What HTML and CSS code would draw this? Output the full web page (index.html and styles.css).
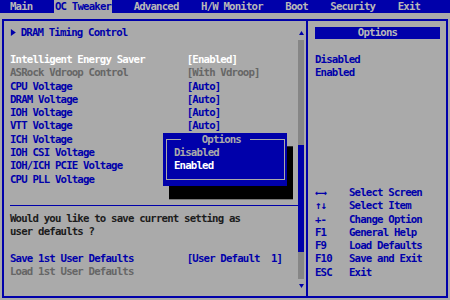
FILE: index.html
```html
<!DOCTYPE html>
<html lang="en">
<head>
    <meta charset="UTF-8">
    <title>OC Tweaker</title>
    <link rel="stylesheet" href="styles.css">
</head>
<body>
<div class="tabs">
    <span class="tab">Main</span>
    <span class="tab active">OC Tweaker</span>
    <span class="tab">Advanced</span>
    <span class="tab">H/W Monitor</span>
    <span class="tab">Boot</span>
    <span class="tab">Security</span>
    <span class="tab">Exit</span>
</div>

<div class="frame">
    <!-- settings list -->
    <div class="main">
        <div class="list">
            <div class="row submenu">
                <svg class="arrow" width="6" height="7" viewBox="0 0 6 7"><polygon points="0,0 5,3.5 0,7" fill="#0000aa"/></svg>
                <span>DRAM Timing Control</span>
            </div>
            <div class="gap"></div>
            <div class="row current"><span class="label">Intelligent Energy Saver</span><span class="value">[Enabled]</span></div>
            <div class="row off"><span class="label">ASRock Vdroop Control</span><span class="value">[With Vdroop]</span></div>
            <div class="row"><span class="label">CPU Voltage</span><span class="value">[Auto]</span></div>
            <div class="row"><span class="label">DRAM Voltage</span><span class="value">[Auto]</span></div>
            <div class="row"><span class="label">IOH Voltage</span><span class="value">[Auto]</span></div>
            <div class="row"><span class="label">VTT Voltage</span><span class="value">[Auto]</span></div>
            <div class="row"><span class="label">ICH Voltage</span></div>
            <div class="row"><span class="label">IOH CSI Voltage</span></div>
            <div class="row"><span class="label">IOH/ICH PCIE Voltage</span></div>
            <div class="row"><span class="label">CPU PLL Voltage</span></div>
            <div class="gap"></div>
            <div class="rule"></div>
            <p class="note">Would you like to save current setting as<br>user defaults ?</p>
            <div class="gap"></div>
            <div class="row"><span class="label">Save 1st User Defaults</span><span class="value">[User Default  1]</span></div>
            <div class="row off"><span class="label">Load 1st User Defaults</span></div>
        </div>

        <div class="scrollbar">
            <div class="scroll-btn">
                <svg width="5" height="4" viewBox="0 0 5 4"><polygon points="2.5,0 5,4 0,4" fill="#0000aa"/></svg>
            </div>
            <div class="track"><div class="thumb"></div></div>
            <div class="scroll-btn">
                <svg width="5" height="4" viewBox="0 0 5 4"><polygon points="0,0 5,0 2.5,4" fill="#0000aa"/></svg>
            </div>
        </div>
    </div>

    <!-- right help pane -->
    <div class="help">
        <div class="help-title">Options</div>
        <div class="gap"></div>
        <div class="row">Disabled</div>
        <div class="row">Enabled</div>

        <div class="keys">
            <div class="row"><span class="key">←→</span><span>Select Screen</span></div>
            <div class="row"><span class="key">↑↓</span><span>Select Item</span></div>
            <div class="row"><span class="key">+-</span><span>Change Option</span></div>
            <div class="row"><span class="key">F1</span><span>General Help</span></div>
            <div class="row"><span class="key">F9</span><span>Load Defaults</span></div>
            <div class="row"><span class="key">F10</span><span>Save and Exit</span></div>
            <div class="row"><span class="key">ESC</span><span>Exit</span></div>
        </div>
    </div>

    <!-- options popup over the list -->
    <div class="popup">
        <fieldset class="popup-box">
            <legend>Options</legend>
            <div class="row">Disabled</div>
            <div class="row picked">Enabled</div>
        </fieldset>
    </div>
</div>
</body>
</html>
```

FILE: styles.css
```css
body {
    margin: 0;
    width: 450px;
    height: 300px;
    overflow: hidden;
    background: #aaaaaa;
    font-family: "DejaVu Sans Mono", monospace;
    font-size: 10.7px;
    font-weight: bold;
    letter-spacing: -0.82px;
    line-height: 13.3px;
    color: #0000aa;
}

/* top menu */
.tabs {
    display: flex;
    gap: 22.5px;
    height: 13px;
    padding-left: 10px;
    background: #0000aa;
    line-height: 13px;
    color: #b8b8b8;
    white-space: pre;
}

.tab.active {
    margin: 0 -1px;
    padding: 0 1px;
    background: #aaaaaa;
    color: #0000aa;
}

/* main frame */
.frame {
    position: relative;
    display: flex;
    box-sizing: border-box;
    height: 279px;
    margin: 6px 2px 0;
    border: 2px solid #0000aa;
}

.main {
    display: flex;
    box-sizing: border-box;
    width: 304px;
    padding: 5.35px 2px 0 6px;
    border-right: 2px solid #0000aa;
}

.list {
    flex: 1;
}

.row {
    display: flex;
    height: 13.3px;
    white-space: pre;
}

.gap {
    height: 13.3px;
}

.label {
    width: 176.7px;
}

.current {
    color: #ffffff;
}

.off {
    color: #666666;
}

.submenu {
    margin-left: -3px;
    align-items: center;
}

.submenu .arrow {
    width: 13.7px;
}

.rule {
    margin: 5.9px 0 5.9px;
    border-top: 1.5px solid #0000aa;
}

.note {
    margin: 0;
    color: #1c1c1c;
}

/* scrollbar */
.scrollbar {
    display: flex;
    flex-direction: column;
    width: 6px;
}

.scroll-btn {
    display: flex;
    align-items: center;
    justify-content: center;
    height: 13.3px;
}

.track {
    height: 239.4px;
    padding-top: 105.4px;
    box-sizing: border-box;
    background: #868686;
}

.thumb {
    height: 107px;
    background: #0000aa;
}

/* help pane */
.help {
    flex: 1;
    padding: 5.35px 6px 0 7px;
}

.help-title {
    height: 12px;
    margin: 0.65px 0;
    line-height: 12px;
    text-align: center;
    background: #0000aa;
    color: #b8b8b8;
}

.keys {
    margin-top: 106.4px;
}

.key {
    width: 34px;
}

/* popup */
.popup {
    position: absolute;
    left: 158.7px;
    top: 111.75px;
    width: 124.3px;
    height: 53.2px;
    background: #0000aa;
    box-shadow: 6px 13.3px 0 #000000;
}

.popup-box {
    margin: 0 2px 0 3.3px;
    padding: 0 0 6.65px 7px;
    border: 1px solid #aaaaaa;
    color: #aaaaaa;
}

.popup-box legend {
    margin-left: 7px;
    padding: 0 9px 0 20.7px;
    line-height: 13.3px;
}

.picked {
    color: #ffffff;
}
```
